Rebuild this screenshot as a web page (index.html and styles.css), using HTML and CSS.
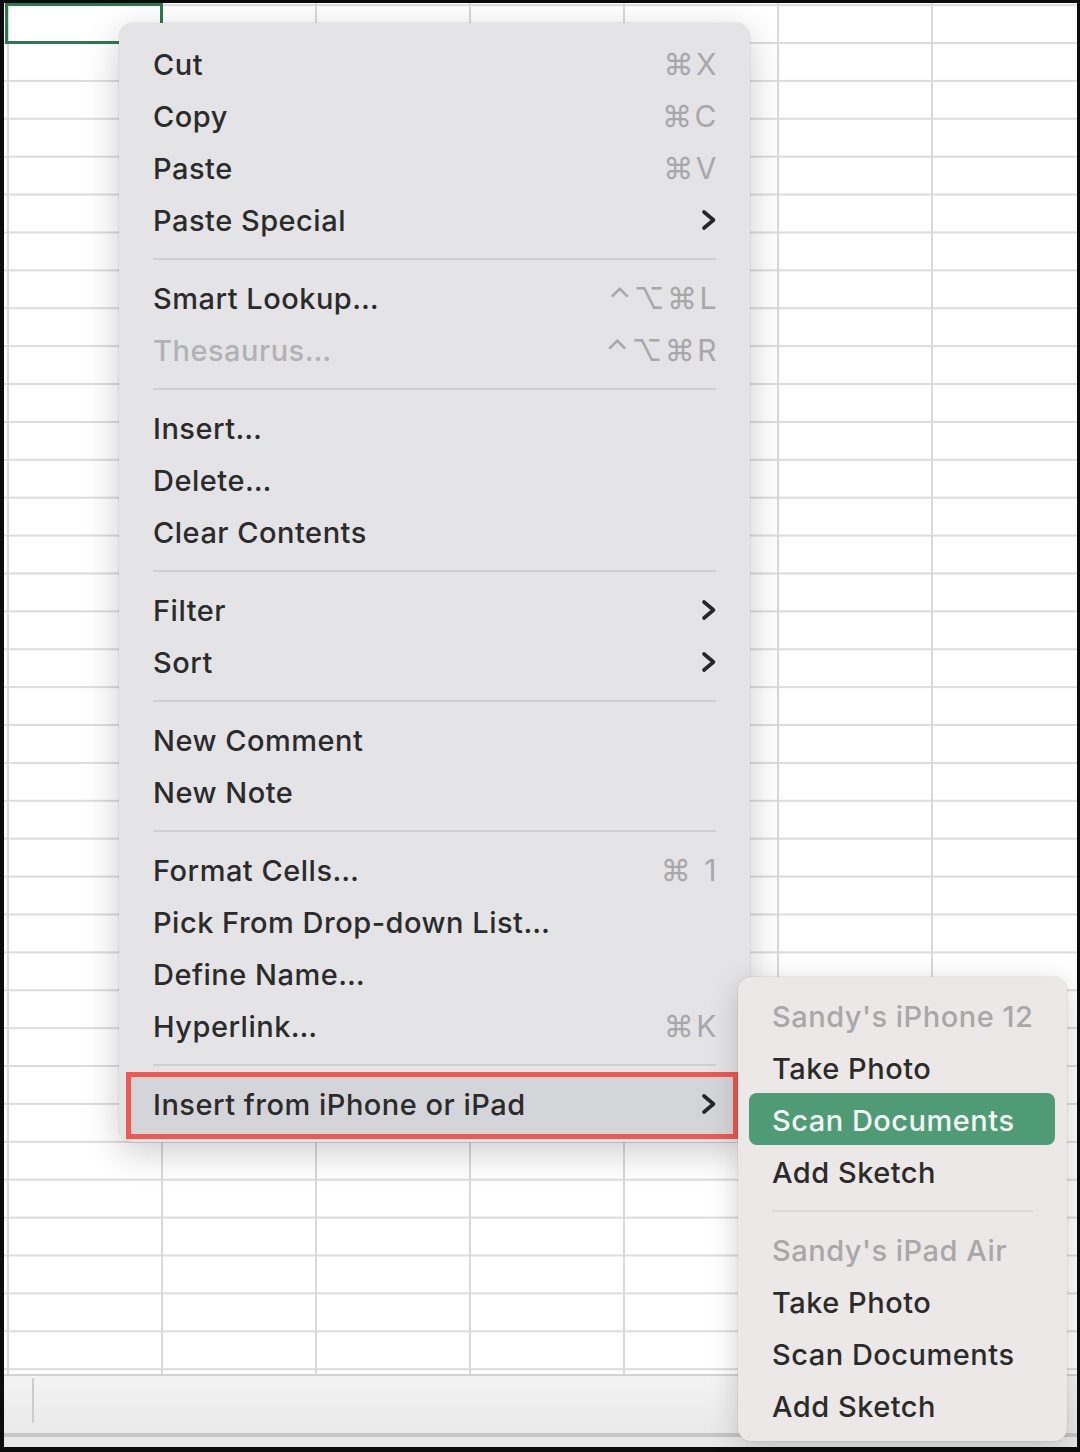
FILE: index.html
```html
<!DOCTYPE html>
<html lang="en">
<head>
<meta charset="utf-8">
<title>Context menu</title>
<link rel="stylesheet" href="styles.css">
</head>
<body>
<div class="screen">
  <div class="sheet">
    <div class="grid">
      <div class="selected-cell"></div>
    </div>
    <div class="statusbar">
      <div class="sb-cell"></div>
    </div>
    <div class="statusbar-edge"></div>
  </div>

  <div class="menu main-menu">
    <div class="item"><span class="label">Cut</span><span class="key">⌘X</span></div>
    <div class="item"><span class="label">Copy</span><span class="key">⌘C</span></div>
    <div class="item"><span class="label">Paste</span><span class="key">⌘V</span></div>
    <div class="item"><span class="label">Paste Special</span><svg class="chev" viewBox="0 0 16 24"><path d="M3 4 L12.5 12 L3 20"/></svg></div>
    <div class="sep"></div>
    <div class="item"><span class="label">Smart Lookup…</span><span class="key">⌃⌥⌘L</span></div>
    <div class="item disabled"><span class="label">Thesaurus…</span><span class="key">⌃⌥⌘R</span></div>
    <div class="sep"></div>
    <div class="item"><span class="label">Insert…</span></div>
    <div class="item"><span class="label">Delete…</span></div>
    <div class="item"><span class="label">Clear Contents</span></div>
    <div class="sep"></div>
    <div class="item"><span class="label">Filter</span><svg class="chev" viewBox="0 0 16 24"><path d="M3 4 L12.5 12 L3 20"/></svg></div>
    <div class="item"><span class="label">Sort</span><svg class="chev" viewBox="0 0 16 24"><path d="M3 4 L12.5 12 L3 20"/></svg></div>
    <div class="sep"></div>
    <div class="item"><span class="label">New Comment</span></div>
    <div class="item"><span class="label">New Note</span></div>
    <div class="sep"></div>
    <div class="item"><span class="label">Format Cells…</span><span class="key">⌘ 1</span></div>
    <div class="item"><span class="label">Pick From Drop-down List…</span></div>
    <div class="item"><span class="label">Define Name…</span></div>
    <div class="item"><span class="label">Hyperlink…</span><span class="key">⌘K</span></div>
    <div class="sep"></div>
    <div class="item active">
      <span class="callout"></span>
      <span class="label">Insert from iPhone or iPad</span>
      <svg class="chev" viewBox="0 0 16 24"><path d="M3 4 L12.5 12 L3 20"/></svg>
    </div>
  </div>

  <div class="menu sub-menu">
    <div class="item header"><span class="label">Sandy's iPhone 12</span></div>
    <div class="item"><span class="label">Take Photo</span></div>
    <div class="item selected"><span class="label">Scan Documents</span></div>
    <div class="item"><span class="label">Add Sketch</span></div>
    <div class="sep"></div>
    <div class="item header"><span class="label">Sandy's iPad Air</span></div>
    <div class="item"><span class="label">Take Photo</span></div>
    <div class="item"><span class="label">Scan Documents</span></div>
    <div class="item"><span class="label">Add Sketch</span></div>
  </div>
</div>
</body>
</html>
```
FILE: styles.css
```css
* { box-sizing: border-box; }

html, body {
  margin: 0;
  padding: 0;
}

body {
  width: 1080px;
  height: 1452px;
  background: #0c0c0c;
  overflow: hidden;
  font-family: "Inter", "Noto Sans", "DejaVu Sans", sans-serif;
}

.screen {
  position: relative;
  width: 1080px;
  height: 1452px;
  padding: 3px 3px 5px 4px;
}

.sheet {
  position: relative;
  height: 100%;
  display: flex;
  flex-direction: column;
  background: #ffffff;
}

.grid {
  position: relative;
  flex: 1;
  background-color: #ffffff;
  background-image:
    linear-gradient(to right, #d9d9d9 0, #d9d9d9 2px, transparent 2px),
    linear-gradient(to bottom, #dcdcdc 0, #dcdcdc 2px, transparent 2px);
  background-size: 154px 100%, 100% 37.9px;
  background-position: 157px 0, 0 39px;
}

.selected-cell {
  position: absolute;
  left: 1px;
  top: 0;
  width: 158px;
  height: 41px;
  border: 3px solid #2a7a4d;
}

.statusbar {
  height: 59px;
  flex: none;
  border-top: 2px solid #d2d2d2;
  background: linear-gradient(#f4f4f4, #e9e9e9);
  display: flex;
  padding: 2px 0 10px 0;
}

.sb-cell {
  width: 30px;
  border-right: 2px solid #cccccc;
}

.statusbar-edge {
  height: 14px;
  flex: none;
  border-top: 4px solid #c6c6c6;
  background: #e8e8e8;
}

/* ---------- menus ---------- */

.menu {
  position: absolute;
  display: flex;
  flex-direction: column;
  color: #2b2b2b;
  font-size: 29px;
  font-weight: 500;
  letter-spacing: 0.5px;
}

.main-menu {
  left: 119px;
  top: 23px;
  width: 631px;
  height: 1119px;
  padding: 15px 0 12px 0;
  background: #e4e4e7;
  border-radius: 14px;
  box-shadow: 0 10px 36px rgba(0, 0, 0, 0.20), 0 0 0 1px rgba(0, 0, 0, 0.05);
}

.sub-menu {
  left: 738px;
  top: 977px;
  width: 329px;
  height: 464px;
  padding: 13px 0 9px 0;
  background: #ebe8e7;
  border-radius: 13px;
  box-shadow: 0 8px 30px rgba(0, 0, 0, 0.18), 0 0 0 1px rgba(0, 0, 0, 0.05);
}

.item {
  position: relative;
  height: 52px;
  flex: none;
  display: flex;
  align-items: center;
  justify-content: space-between;
  padding: 0 34px;
  white-space: nowrap;
}

.label {
  position: relative;
}

.key {
  color: #a8a8ab;
  font-weight: 400;
  font-size: 30px;
  letter-spacing: 2.5px;
  margin-right: -3px;
}

.disabled .label {
  color: #b2b2b5;
}

.chev {
  position: relative;
  width: 16px;
  height: 24px;
  margin-right: -1px;
}

.chev path {
  fill: none;
  stroke: #262626;
  stroke-width: 3.6;
  stroke-linecap: round;
  stroke-linejoin: round;
}

.sep {
  height: 26px;
  flex: none;
  margin: 0 34px;
  display: flex;
  align-items: center;
}

.sep::before {
  content: "";
  flex: 1;
  height: 2px;
  background: #cfcfd2;
}

.sub-menu .sep::before {
  background: #dcd9d8;
}

.callout {
  position: absolute;
  top: -6px;
  bottom: -9px;
  left: 7px;
  right: 12px;
  background: #d4d5d9;
  border: 5px solid #f1584f;
}

.header .label {
  color: #a9a7a7;
}

.sub-menu .item.selected::before {
  content: "";
  position: absolute;
  left: 11px;
  right: 12px;
  top: -1px;
  bottom: 1px;
  border-radius: 8px;
  background: #4f9b75;
}

.sub-menu .item.selected .label {
  color: #f4f8f5;
}
```
